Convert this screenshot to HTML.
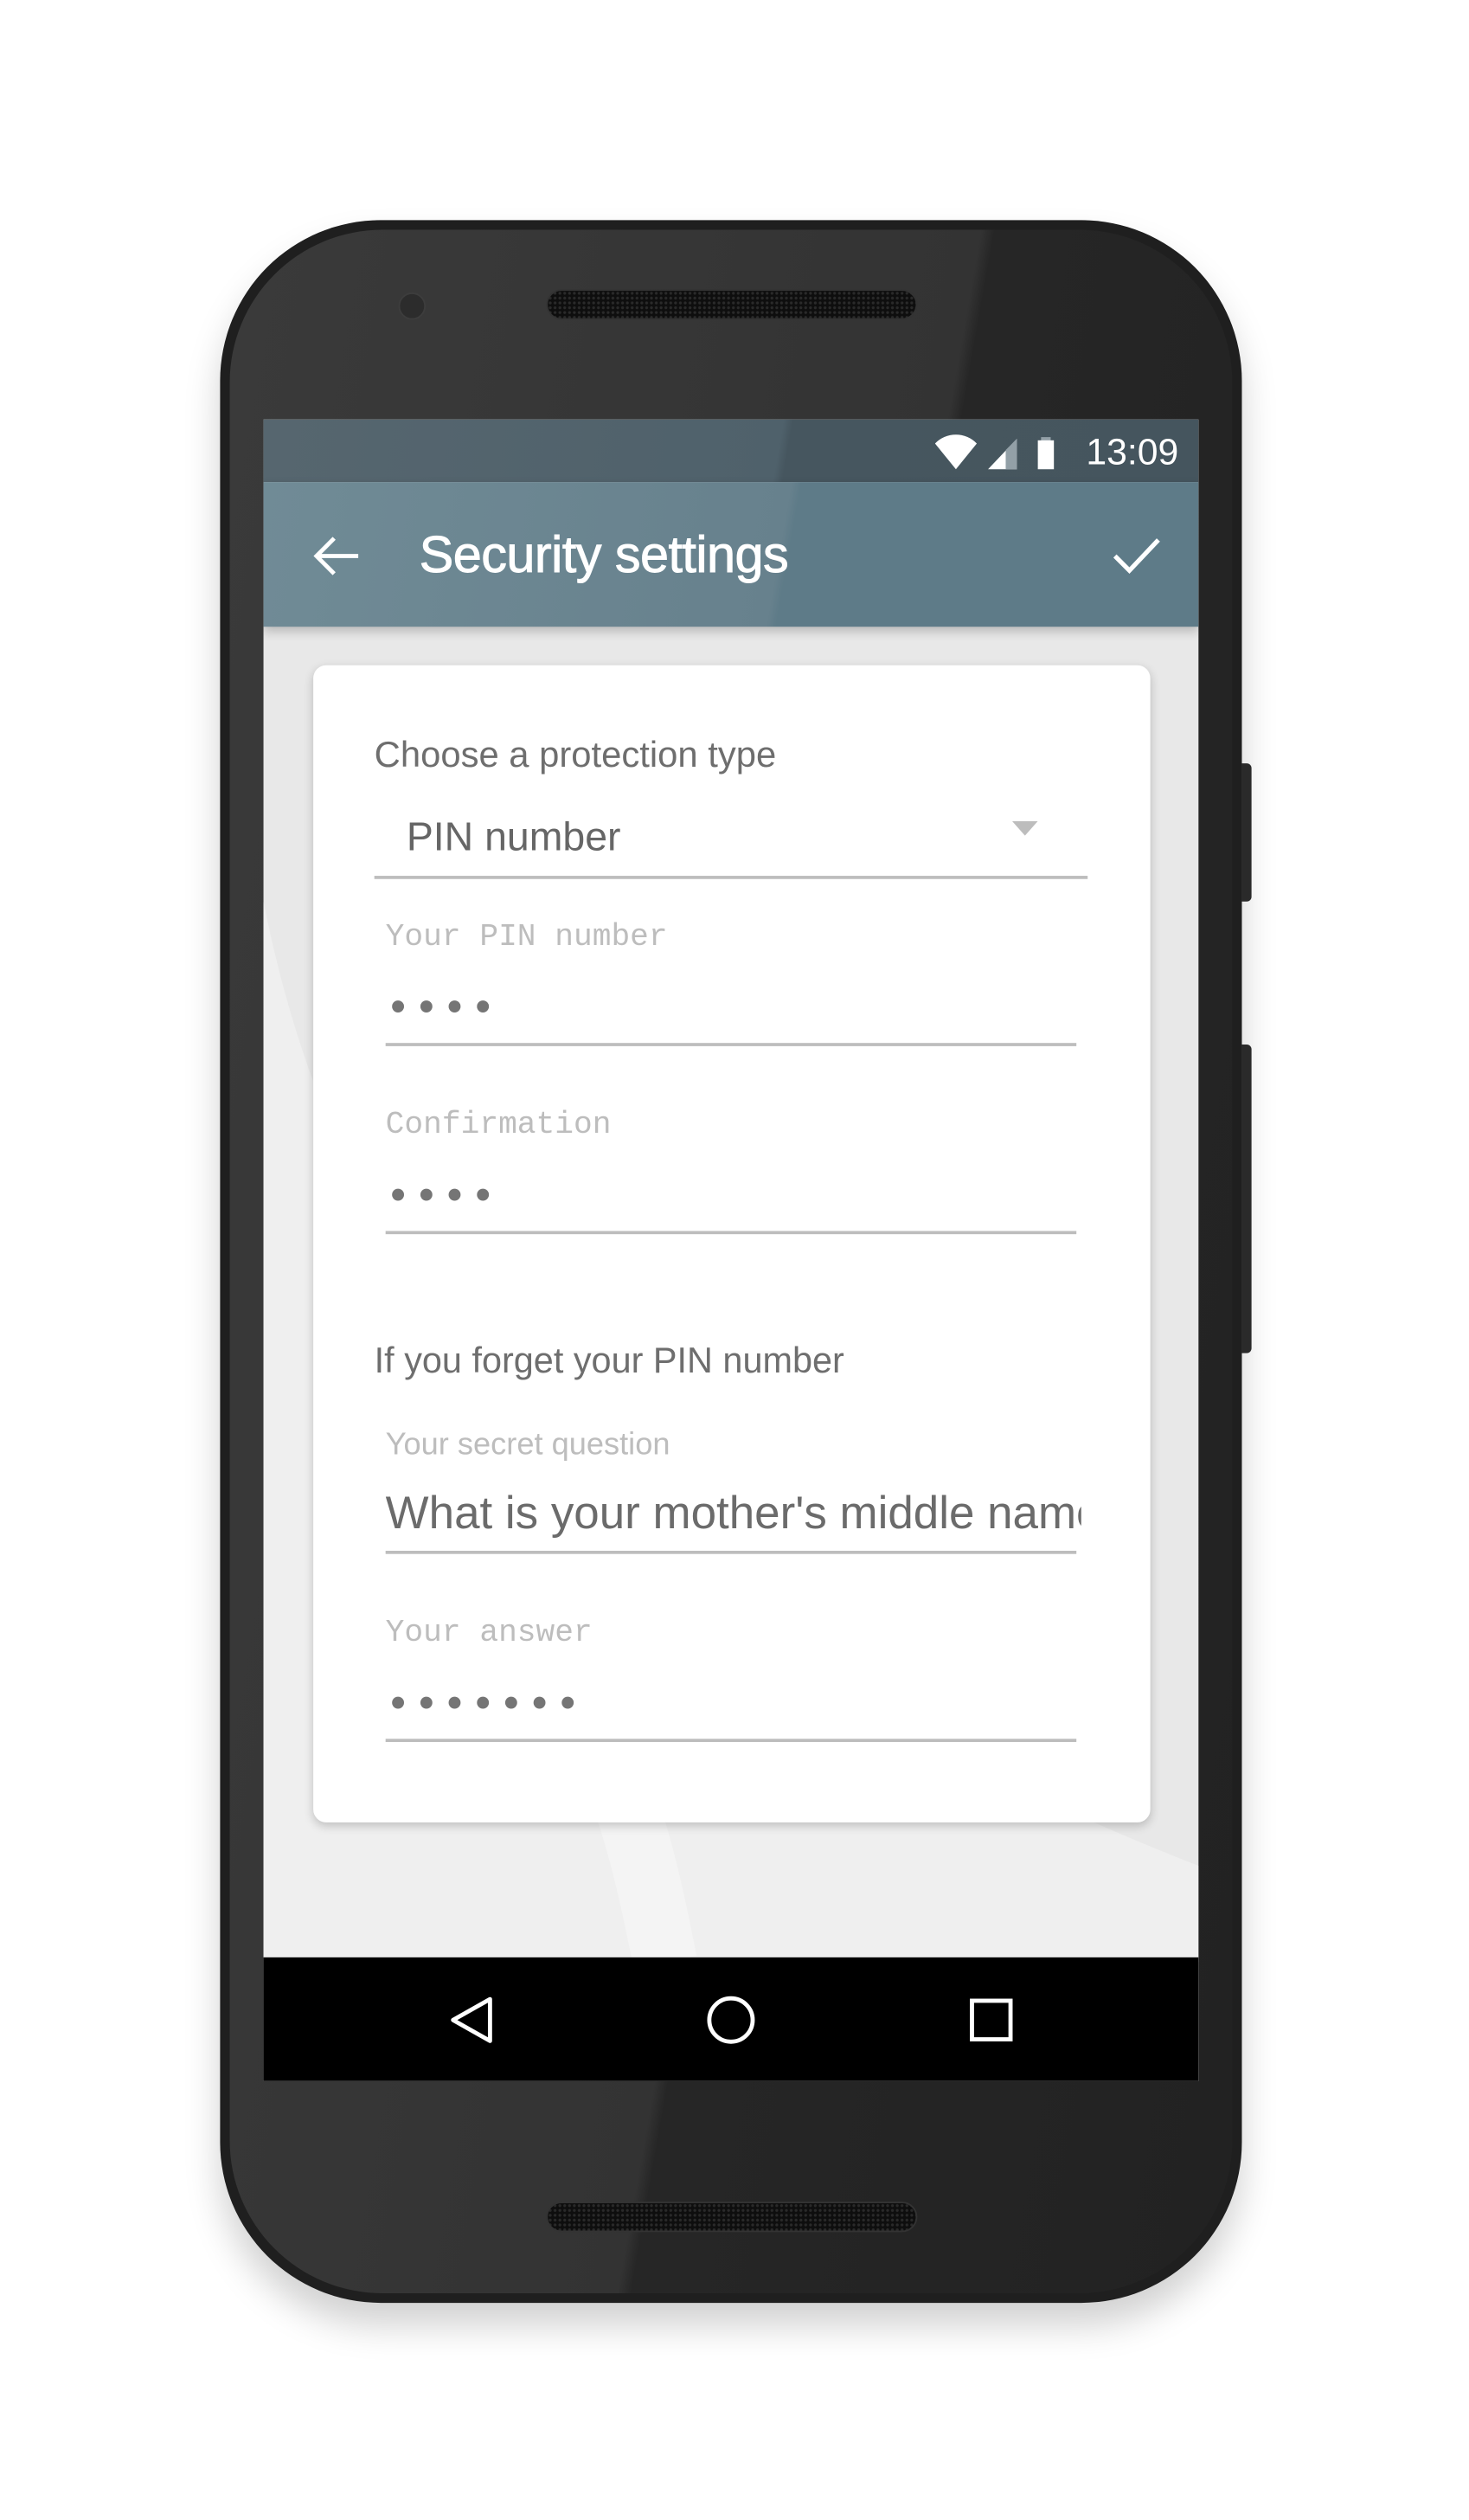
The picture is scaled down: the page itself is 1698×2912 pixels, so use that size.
<!DOCTYPE html>
<html><head><meta charset="utf-8"><style>
*{margin:0;padding:0;box-sizing:border-box}
html,body{width:1698px;height:2911px;overflow:hidden;background:#fff}
#w{position:absolute;left:0;top:0;width:915px;height:1568px;transform:scale(1.857);transform-origin:0 0;font-family:"Liberation Sans",sans-serif}
.a{position:absolute}
.phone{left:137px;top:137px;width:636px;height:1296px;border-radius:100px/100px;background:#1f1f1f;box-shadow:0 14px 22px rgba(0,0,0,.18)}
.inner{left:143px;top:143px;width:624px;height:1284px;border-radius:95px/95px;background:linear-gradient(100deg,#3a3a3a 0%,#333 55%,#262626 56%,#222 100%)}
.spk{border-radius:10px;background:#0e0e0e;border:1px solid #333;background-image:radial-gradient(#2a2a2a 0.8px,transparent 1px);background-size:3px 3px}
.screen{left:164px;top:261px;width:582px;height:1034px;background:#e8e8e8;overflow:hidden}
.t{position:absolute;white-space:nowrap;color:#6e6e6e}
.mono{font-family:"Liberation Mono",monospace;color:#bdbdbd;font-size:19.5px}
.line{position:absolute;height:1.5px;background:#bdbdbd}
.dots{position:absolute;font-size:26px;font-weight:bold;color:#757575;letter-spacing:2px;font-family:"Liberation Mono",monospace}
</style></head><body><div id="w">
<div class="a phone"></div>
<div class="a inner"></div>
<div class="a" style="left:773px;top:475px;width:6px;height:86px;background:#2a2a2a;border-radius:0 3px 3px 0"></div>
<div class="a" style="left:773px;top:650px;width:6px;height:192px;background:#2a2a2a;border-radius:0 3px 3px 0"></div>
<div class="a spk" style="left:340px;top:180px;width:231px;height:19px"></div>
<div class="a spk" style="left:340px;top:1370px;width:231px;height:19px"></div>
<div class="a" style="left:248px;top:182px;width:17px;height:17px;border-radius:50%;background:#2c2c2c;border:1px solid #3d3d3d"></div>
<div class="a screen">
  <div class="a" style="left:0;top:0;width:582px;height:39px;background:linear-gradient(100deg,#56666f 0%,#4f616b 55%,#46565f 56%,#45555e 100%)"></div>
  <svg class="a" style="left:418px;top:7px" width="80" height="26" viewBox="0 0 80 26">
    <path d="M0 8 A18 18 0 0 1 26 8 L13 24 Z" fill="#fff"/>
    <path d="M33 24 L51 5 L51 24 Z" fill="#fff"/>
    <path d="M44 12 L51 5 L51 24 L44 24 Z" fill="#93a0a7"/>
    <rect x="66" y="4" width="6" height="3" fill="#93a0a7"/>
    <rect x="64" y="6" width="10" height="18" fill="#fff"/>
  </svg>
  <div class="t" style="left:512px;top:7px;color:#fff;font-size:23px">13:09</div>
  <div class="a" style="left:0;top:39px;width:582px;height:90px;background:linear-gradient(100deg,#708b96 0%,#67818d 55%,#5e7b88 56%,#5e7b88 100%);box-shadow:0 3px 6px rgba(0,0,0,.2)"></div>
  <svg class="a" style="left:31px;top:72px" width="30" height="26" viewBox="0 0 30 26"><path d="M28 13H3M13 2L2 13l11 11" stroke="#fff" stroke-width="2.6" fill="none"/></svg>
  <div class="t" style="left:97px;top:66px;color:#fff;font-size:32px;letter-spacing:-0.3px;-webkit-text-stroke:0.5px #fff">Security settings</div>
  <svg class="a" style="left:528px;top:72px" width="32" height="26" viewBox="0 0 32 26"><path d="M2 13l9 9L29 3" stroke="#fff" stroke-width="2.8" fill="none"/></svg>
  <svg class="a" style="left:0;top:300px" width="582" height="660" viewBox="0 0 582 660"><path d="M0 0 C30 150 120 420 582 600 L582 660 L0 660Z" fill="#efefef"/><path d="M200 500 C230 560 240 610 250 660" stroke="#f4f4f4" stroke-width="40" fill="none"/></svg>
  <div class="a" style="left:31px;top:153px;width:521px;height:720px;background:#fff;border-radius:8px;box-shadow:0 2px 6px rgba(0,0,0,.2)">
    <div class="t" style="left:38px;top:43px;font-size:22.5px">Choose a protection type</div>
    <div class="t" style="left:58px;top:93px;font-size:25px;color:#666">PIN number</div>
    <svg class="a" style="left:435px;top:97px" width="16" height="9"><path d="M0 0h16L8 9z" fill="#bdbdbd"/></svg>
    <div class="line" style="left:38px;top:131px;width:444px"></div>
    <div class="t mono" style="left:45px;top:158px">Your PIN number</div>
    <div class="dots" style="left:45px;top:199px">••••</div>
    <div class="line" style="left:45px;top:235px;width:430px"></div>
    <div class="t mono" style="left:45px;top:275px">Confirmation</div>
    <div class="dots" style="left:45px;top:316px">••••</div>
    <div class="line" style="left:45px;top:352px;width:430px"></div>
    <div class="t" style="left:38px;top:420px;font-size:22.3px">If you forget your PIN number</div>
    <div class="t" style="left:45px;top:474px;font-size:19.5px;color:#bdbdbd">Your secret question</div>
    <div class="a" style="left:45px;top:508px;width:433px;height:40px;overflow:hidden"><div class="t" style="left:0;top:4px;font-size:28.5px;color:#6b6b6b">What is your mother's middle name?</div></div>
    <div class="line" style="left:45px;top:551px;width:430px"></div>
    <div class="t mono" style="left:45px;top:591px">Your answer</div>
    <div class="dots" style="left:45px;top:632px">•••••••</div>
    <div class="line" style="left:45px;top:668px;width:430px"></div>
  </div>
  <div class="a" style="left:0;top:957px;width:582px;height:77px;background:#000"></div>
  <svg class="a" style="left:0;top:957px" width="582" height="77" viewBox="0 0 582 77">
    <path d="M141 26L118 39L141 52Z" fill="none" stroke="#fff" stroke-width="2.6" stroke-linejoin="round"/>
    <circle cx="291" cy="39" r="13.5" fill="none" stroke="#fff" stroke-width="2.6"/>
    <rect x="441" y="27" width="24" height="24" fill="none" stroke="#fff" stroke-width="2.6"/>
  </svg>
</div>
</div></body></html>
